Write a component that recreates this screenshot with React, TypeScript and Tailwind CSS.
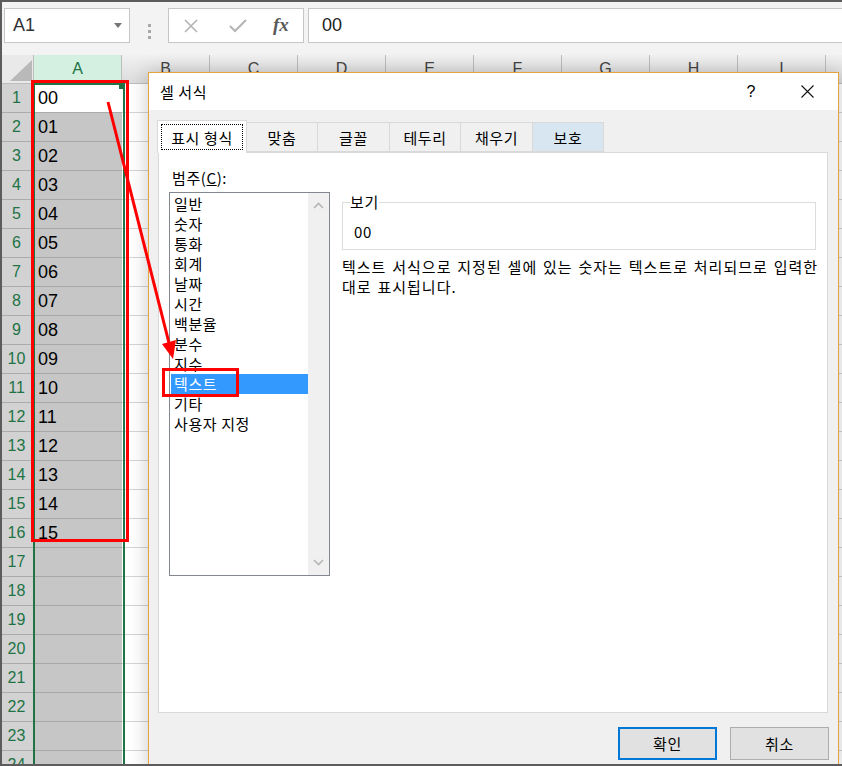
import React from "react";

const rows = Array.from({ length: 24 }, (_, i) => i + 1);
const cols = ["B", "C", "D", "E", "F", "G", "H", "I", ""];
const categories = ["일반", "숫자", "통화", "회계", "날짜", "시간", "백분율", "분수", "지수", "텍스트", "기타", "사용자 지정"];
const tabs = ["표시 형식", "맞춤", "글꼴", "테두리", "채우기", "보호"];
const tabWidths = ["w-[90px]", "w-[71px]", "w-[72px]", "w-[71px]", "w-[72px]", "w-[71px]"];

function FormulaBar() {
  return (
    <div className="flex h-[55px] bg-[#f3f3f3] pt-[8px]">
      <div className="ml-[4px] flex h-[35px] w-[126px] items-center justify-between border border-[#c6c6c6] bg-white pl-[8px] pr-[7px]">
        <span className="text-[18px] text-[#333]">A1</span>
        <svg width="8" height="5" viewBox="0 0 8 5">
          <path d="M0 0h8L4 5z" fill="#777" />
        </svg>
      </div>
      <div className="flex w-[38px] flex-col items-center justify-center gap-[3px] pb-[1px]">
        <span className="h-[3px] w-[3px] bg-[#a8a8a8]" />
        <span className="h-[3px] w-[3px] bg-[#a8a8a8]" />
        <span className="h-[3px] w-[3px] bg-[#a8a8a8]" />
      </div>
      <div className="flex h-[35px] w-[136px] items-center border border-[#c6c6c6] bg-white">
        <svg className="ml-[15px]" width="14" height="14" viewBox="0 0 14 14">
          <path d="M1 1l12 12M13 1L1 13" stroke="#b4b4b4" strokeWidth="1.6" />
        </svg>
        <svg className="ml-[31px]" width="18" height="14" viewBox="0 0 18 14">
          <path d="M1 7l5 5L17 1" stroke="#b4b4b4" strokeWidth="2" fill="none" />
        </svg>
        <span className="ml-[26px] font-['Liberation_Serif'] text-[19px] font-bold italic text-[#5a5a5a]">fx</span>
      </div>
      <div className="ml-[4px] flex h-[35px] flex-1 items-center border border-r-0 border-[#c6c6c6] bg-white pl-[13px]">
        <span className="text-[18px] text-[#222]">00</span>
      </div>
    </div>
  );
}

function Grid() {
  return (
    <div>
      <div className="flex h-[29px]">
        <div className="relative w-[34px] shrink-0 border-r border-b border-[#bdbdbd] bg-[#e9e9e9]">
          <svg className="absolute left-[10px] top-[5px]" width="22" height="21" viewBox="0 0 22 21">
            <path d="M22 0V21H0z" fill="#b9b9b9" />
          </svg>
        </div>
        <div className="flex w-[88px] shrink-0 items-center justify-center border-r border-b border-[#bdbdbd] bg-[#d3f0e0] text-[16px] text-[#217346]">
          A
        </div>
        {cols.map((c, i) => (
          <div
            key={i}
            className="flex w-[88px] shrink-0 items-center justify-center border-r border-b border-[#bdbdbd] bg-gradient-to-b from-[#f1f1f1] to-[#dcdcdc] text-[16px] text-[#444]"
          >
            {c}
          </div>
        ))}
      </div>
      {rows.map((r) => (
        <div key={r} className="flex h-[29px]">
          <div className="flex w-[34px] shrink-0 items-center justify-center border-r border-b border-[#ababab] bg-[#d2d2d2] text-[16px] text-[#217346]">
            {r}
          </div>
          <div
            className={
              r === 1
                ? "flex w-[88px] shrink-0 items-center border-b border-[#ababab] bg-white pl-[4px] text-[18px] text-black"
                : "flex w-[88px] shrink-0 items-center border-b border-[#a8a8a8] bg-[#c6c6c6] pl-[4px] text-[18px] text-black"
            }
          >
            {r <= 16 ? String(r - 1).padStart(2, "0") : ""}
          </div>
          {cols.map((c, i) => (
            <div key={i} className="w-[88px] shrink-0 border-r border-b border-[#d4d4d4] bg-white" />
          ))}
        </div>
      ))}
    </div>
  );
}

function FormatDialog() {
  return (
    <div className="absolute left-[148px] top-[72px] h-[700px] w-[691px] border border-[#e6a33e] bg-[#f0f0f0] font-['Noto_Sans_CJK_KR',sans-serif] text-[15px] tracking-[0.6px] text-black shadow-[0_0_18px_rgba(0,0,0,0.22)]">
      <div className="flex h-[37px] items-center bg-white pl-[11px]">
        <span className="leading-none">셀 서식</span>
        <span className="ml-auto font-['Liberation_Sans'] text-[16px] leading-none">?</span>
        <svg className="ml-[45px] mr-[24px]" width="13" height="13" viewBox="0 0 13 13">
          <path d="M0.5 0.5l12 12M12.5 0.5l-12 12" stroke="#111" strokeWidth="1.1" />
        </svg>
      </div>

      <div className="px-[8px] pt-[10px]">
        <div className="flex h-[32px] items-end">
          {tabs.map((t, i) =>
            i === 0 ? (
              <div key={t} className={`relative z-10 -mb-px h-[33px] ${tabWidths[i]} border border-b-0 border-[#d9d9d9] bg-white p-[3px]`}>
                <div className="flex h-full items-center justify-center border border-dotted border-black leading-none">{t}</div>
              </div>
            ) : (
              <div
                key={t}
                className={`flex h-[30px] ${tabWidths[i]} items-center justify-center border border-l-0 border-[#d9d9d9] leading-none ${
                  t === "보호" ? "bg-[#d8e6f2]" : "bg-[#f0f0f0]"
                }`}
              >
                {t}
              </div>
            )
          )}
        </div>

        <div className="ml-px flex h-[561px] w-[670px] border border-[#d9d9d9] bg-white pl-[10px] pt-[15px]">
          <div className="w-[161px]">
            <div className="ml-[3px] h-[20px] leading-[20px]">
              범주(<span className="underline">C</span>):
            </div>
            <div className="mt-[4px] flex h-[384px] border border-[#828790]">
              <div className="flex-1 pt-px pl-px">
                {categories.map((c) => (
                  <div
                    key={c}
                    className={
                      c === "텍스트"
                        ? "h-[20px] bg-[#3399ff] pl-[3px] leading-[20px] text-white"
                        : "h-[20px] pl-[3px] leading-[20px]"
                    }
                  >
                    {c}
                  </div>
                ))}
              </div>
              <div className="flex w-[21px] flex-col items-center justify-between bg-[#f0f0f0] py-[9px]">
                <svg width="11" height="7" viewBox="0 0 11 7">
                  <path d="M1 6l4.5-4.5L10 6" stroke="#b5b5b5" strokeWidth="1.6" fill="none" />
                </svg>
                <svg width="11" height="7" viewBox="0 0 11 7">
                  <path d="M1 1l4.5 4.5L10 1" stroke="#b5b5b5" strokeWidth="1.6" fill="none" />
                </svg>
              </div>
            </div>
          </div>

          <div className="ml-[12px] w-[474px] pt-[24px]">
            <fieldset className="h-[58px] border border-[#dcdcdc] pl-[7px]">
              <legend className="h-[20px] leading-[20px]">보기</legend>
              <div className="pl-[4px] pt-[10px] leading-[20px]">00</div>
            </fieldset>
            <p className="mt-[7px] whitespace-nowrap leading-[20px] tracking-[1px] [word-spacing:1.5px]">
              텍스트 서식으로 지정된 셀에 있는 숫자는 텍스트로 처리되므로 입력한
              <br />
              대로 표시됩니다.
            </p>
          </div>
        </div>

        <div className="mt-[14px] flex justify-end gap-[13px] pr-[1px]">
          <button className="h-[33px] w-[99px] border-2 border-[#0078d7] bg-[#e1e1e1] leading-none">확인</button>
          <button className="h-[33px] w-[99px] border border-[#adadad] bg-[#e1e1e1] leading-none">취소</button>
        </div>
      </div>
    </div>
  );
}

export default function App() {
  return (
    <div className="relative h-[766px] w-[842px] overflow-hidden bg-white font-['Liberation_Sans',sans-serif]">
      <FormulaBar />
      <Grid />

      {/* selection outline on column A */}
      <div className="pointer-events-none absolute left-[33px] top-[83px] h-[700px] w-[92px] border-2 border-[#217346]" />
      <div className="pointer-events-none absolute left-[119px] top-[83px] h-[6px] w-[6px] bg-[#217346]" />

      <FormatDialog />

      {/* red annotations */}
      <div className="pointer-events-none absolute left-[31px] top-[80px] h-[462px] w-[98px] border-[3px] border-[#ff0000]" />
      <div className="pointer-events-none absolute left-[162px] top-[368px] h-[29px] w-[77px] border-[3px] border-[#ff0000]" />
      <svg className="pointer-events-none absolute left-0 top-0" width="842" height="766">
        <line x1="108" y1="102" x2="169" y2="343" stroke="#ff0000" strokeWidth="3" />
        <polygon points="173,359 176,340 162,344" fill="#ff0000" />
      </svg>

      <div className="pointer-events-none absolute inset-0 border-t-2 border-l-2 border-b-2 border-[#5c5c5c]" />
    </div>
  );
}
